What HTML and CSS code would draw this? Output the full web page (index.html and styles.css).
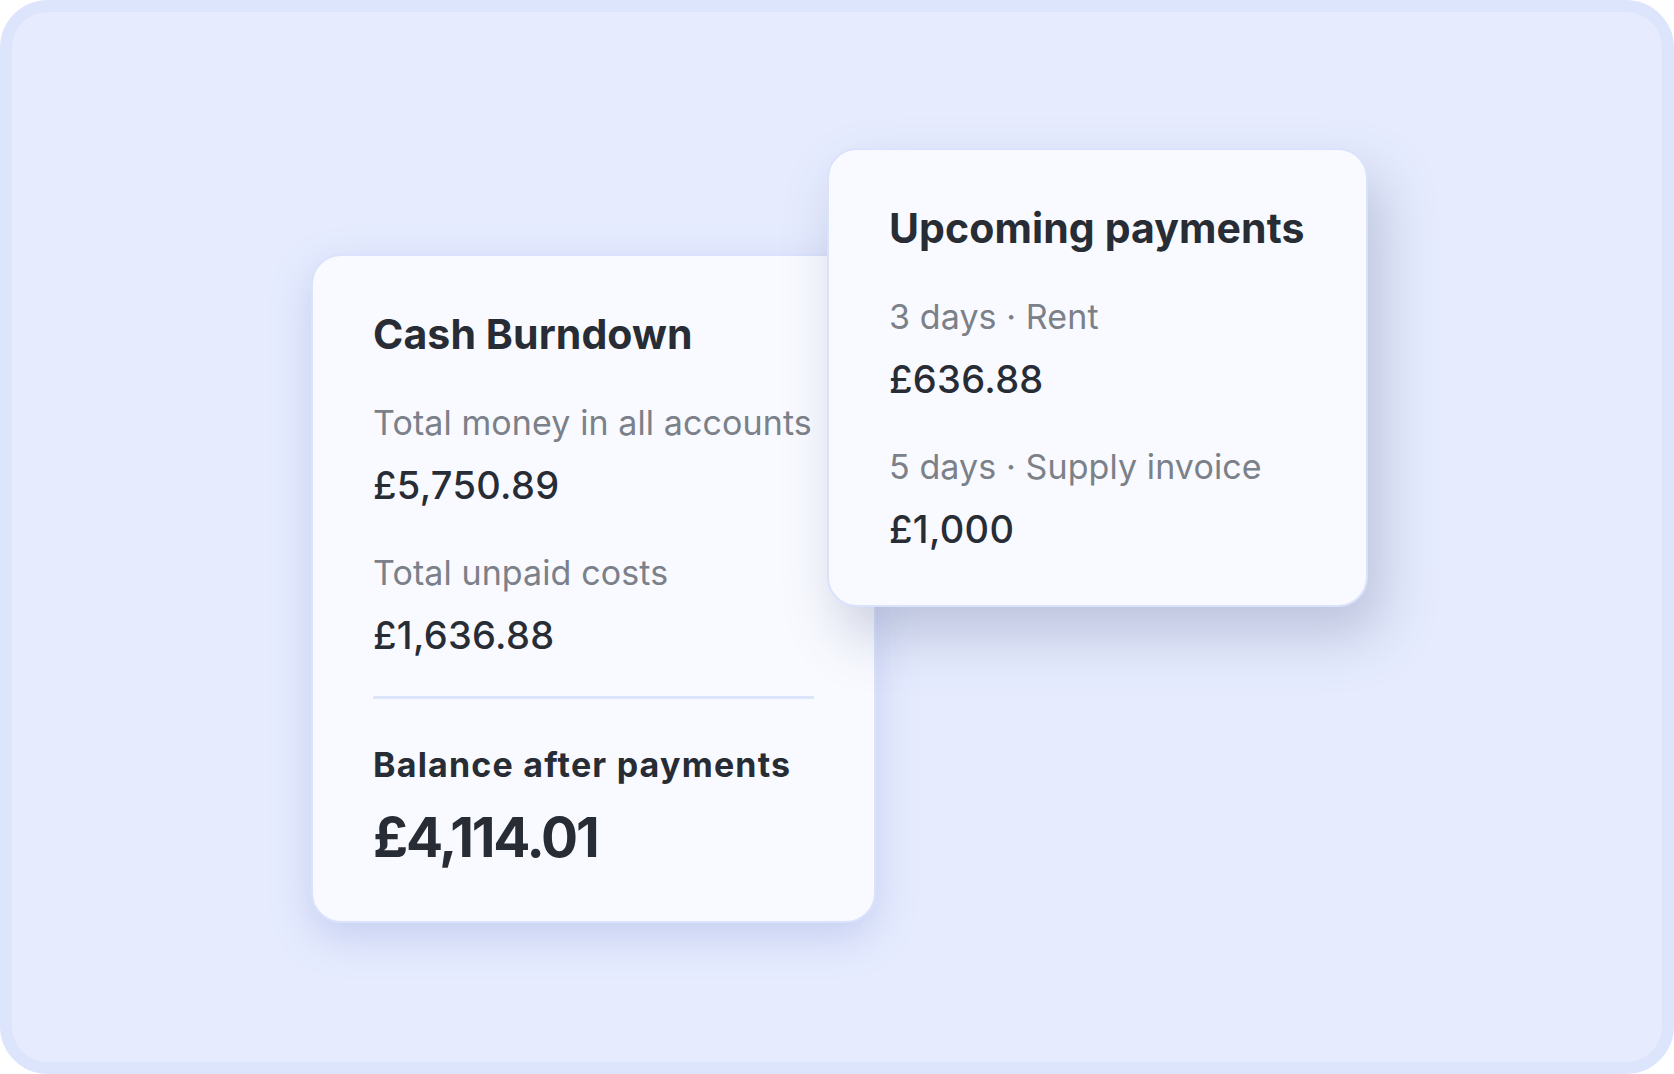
FILE: index.html
```html
<!DOCTYPE html>
<html lang="en">
<head>
<meta charset="UTF-8">
<meta name="viewport" content="width=device-width, initial-scale=1.0">
<title>Cash Burndown</title>
<link rel="stylesheet" href="styles.css">
</head>
<body>

<div class="frame">
  <div class="stage">
    <div class="card card-burndown">
      <h2 class="card-title">Cash Burndown</h2>
      <div class="row">
        <div class="label">Total money in all accounts</div>
        <div class="value">£5,750.89</div>
      </div>
      <div class="row">
        <div class="label">Total unpaid costs</div>
        <div class="value">£1,636.88</div>
      </div>
      <hr class="divider">
      <div class="total-label">Balance after payments</div>
      <div class="total-value">£4,114.01</div>
    </div>

    <div class="card card-upcoming">
      <h2 class="card-title">Upcoming payments</h2>
      <div class="row">
        <div class="label">3 days · Rent</div>
        <div class="value">£636.88</div>
      </div>
      <div class="row">
        <div class="label">5 days · Supply invoice</div>
        <div class="value">£1,000</div>
      </div>
    </div>
  </div>
</div>

</body>
</html>
```

FILE: styles.css
```css
:root {
  --frame: #dde5fd;
  --background: #e6ecfe;
  --card: #f8faff;
  --card-border: #dae2fc;
  --text: #282c34;
  --muted: #7b8089;
}
body {
  margin: 0;
  font-family: Inter, 'Noto Sans', sans-serif;
  color: var(--text);
}
.frame {
  height: 100vh;
  box-sizing: border-box;
  border: 12px solid var(--frame);
  border-radius: 48px;
  background: var(--background);
  overflow: hidden;
}
.stage {
  display: flex;
  align-items: flex-start;
  padding: 136px 0 0 299px;
}
.card {
  background: var(--card);
  border: 2px solid var(--card-border);
  border-radius: 30px;
  padding: 53px 60px 52px;
}
.card-burndown {
  width: 441px;
  margin-top: 106px;
  box-shadow: 0 14px 40px rgba(112, 128, 205, 0.28);
}
/* sits over the burndown card, so it keeps its own stacking layer */
.card-upcoming {
  width: 417px;
  margin-left: -49px;
  position: relative;
  z-index: 1;
  box-shadow: 14px 28px 56px rgba(74, 86, 130, 0.27);
}
.card-title {
  margin: 0;
  font-size: 41px;
  line-height: 50px;
  font-weight: 700;
  letter-spacing: 0.1px;
}
.row {
  margin-top: 42px;
}
.label {
  font-size: 34px;
  line-height: 44px;
  font-weight: 400;
  color: var(--muted);
  letter-spacing: 0.1px;
}
.value {
  margin-top: 16px;
  font-size: 38px;
  line-height: 48px;
  font-weight: 500;
  letter-spacing: 0.3px;
}
.divider {
  margin: 37px 0 0;
  border: none;
  height: 3px;
  background: #dce5fb;
}
.total-label {
  margin-top: 45px;
  font-size: 34px;
  line-height: 42px;
  font-weight: 700;
  letter-spacing: 1.2px;
}
.total-value {
  margin-top: 19px;
  font-size: 55px;
  line-height: 64px;
  font-weight: 700;
  letter-spacing: -2.2px;
}
```
